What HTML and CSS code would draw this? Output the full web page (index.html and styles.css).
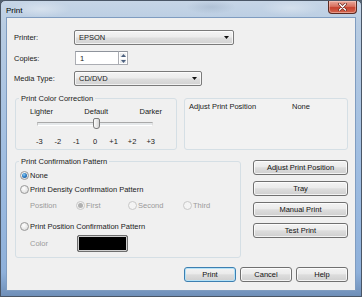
FILE: index.html
```html
<!DOCTYPE html>
<html lang="en">
<head>
  <meta charset="UTF-8">
  <meta name="viewport" content="width=device-width, initial-scale=1.0">
  <title>Print</title>
  <link rel="stylesheet" href="styles.css">
</head>
<body>
  <div class="window">
    <div class="titlebar">
      <span class="title">Print</span>
      <div class="close-btn">
        <svg width="9" height="8" viewBox="0 0 9 8">
          <path d="M1.5 1 L7.5 7 M7.5 1 L1.5 7" stroke="#6a2c24" stroke-width="2.8" stroke-linecap="round"/>
          <path d="M1.5 1 L7.5 7 M7.5 1 L1.5 7" stroke="#fff" stroke-width="1.4" stroke-linecap="round"/>
        </svg>
      </div>
    </div>

    <div class="client">
      <div class="form-row">
        <span class="form-label">Printer:</span>
        <div class="combo combo-printer">
          <span>EPSON</span>
          <svg class="combo-arrow" width="5" height="3" viewBox="0 0 5 3"><polygon points="0,0 5,0 2.5,3" fill="#111"/></svg>
        </div>
      </div>

      <div class="form-row row-copies">
        <span class="form-label">Copies:</span>
        <div class="spin">
          <div class="spin-input">1</div>
          <div class="spin-buttons">
            <div class="spin-btn"><svg width="5" height="3" viewBox="0 0 5 3"><polygon points="0,3 5,3 2.5,0" fill="#4c607f"/></svg></div>
            <div class="spin-btn"><svg width="5" height="3" viewBox="0 0 5 3"><polygon points="0,0 5,0 2.5,3" fill="#4c607f"/></svg></div>
          </div>
        </div>
      </div>

      <div class="form-row row-media">
        <span class="form-label">Media Type:</span>
        <div class="combo combo-media">
          <span>CD/DVD</span>
          <svg class="combo-arrow" width="5" height="3" viewBox="0 0 5 3"><polygon points="0,0 5,0 2.5,3" fill="#111"/></svg>
        </div>
      </div>

      <div class="groups-row">
        <fieldset class="group group-color">
          <legend>Print Color Correction</legend>
          <div class="scale-labels">
            <span>Lighter</span>
            <span>Default</span>
            <span>Darker</span>
          </div>
          <div class="slider">
            <div class="slider-track">
              <div class="slider-thumb"></div>
            </div>
          </div>
          <div class="scale-numbers">
            <span>-3</span><span>-2</span><span>-1</span><span>0</span><span>+1</span><span>+2</span><span>+3</span>
          </div>
        </fieldset>

        <div class="position-box">
          <span class="position-name">Adjust Print Position</span>
          <span>None</span>
        </div>
      </div>

      <div class="middle-row">
        <fieldset class="group group-confirm">
          <legend>Print Confirmation Pattern</legend>
          <div class="radio-row row-none">
            <span class="radio checked"></span><span>None</span>
          </div>
          <div class="radio-row row-density">
            <span class="radio"></span><span>Print Density Confirmation Pattern</span>
          </div>
          <div class="sub-row row-position">
            <span class="sub-label">Position</span>
            <div class="sub-item item-first"><span class="radio disabled checked"></span><span>First</span></div>
            <div class="sub-item item-second"><span class="radio disabled"></span><span>Second</span></div>
            <div class="sub-item"><span class="radio disabled"></span><span>Third</span></div>
          </div>
          <div class="radio-row row-pattern">
            <span class="radio"></span><span>Print Position Confirmation Pattern</span>
          </div>
          <div class="sub-row row-color">
            <span class="sub-label color-label">Color</span>
            <div class="color-swatch"></div>
          </div>
        </fieldset>

        <div class="side-buttons">
          <div class="btn">Adjust Print Position</div>
          <div class="btn">Tray</div>
          <div class="btn">Manual Print</div>
          <div class="btn">Test Print</div>
        </div>
      </div>

      <div class="footer">
        <div class="btn btn-default">Print</div>
        <div class="btn">Cancel</div>
        <div class="btn">Help</div>
      </div>
    </div>
  </div>
</body>
</html>
```

FILE: styles.css
```css
* {
  box-sizing: border-box;
}
body {
  margin: 0;
  width: 362px;
  height: 297px;
  overflow: hidden;
  background: #53606e;
  font-family: "Liberation Sans", Arial, sans-serif;
  font-size: 7.5px;
  line-height: 9px;
  color: #1a1a1a;
}
.window {
  width: 362px;
  height: 297px;
  display: flex;
  flex-direction: column;
  border: 1px solid #4a5666;
  border-radius: 5px 5px 0 0;
  background:
    radial-gradient(ellipse 30px 8px at 40px 8px, rgba(255, 255, 255, 0.35), transparent),
    radial-gradient(ellipse 25px 7px at 210px 6px, rgba(120, 140, 165, 0.25), transparent),
    radial-gradient(ellipse 30px 8px at 290px 7px, rgba(255, 255, 255, 0.3), transparent),
    linear-gradient(#c6d5e6, #b8cce2 8%, #9fbde1 55%, #8eb0da 92%, #6f8fb8);
}
.titlebar {
  height: 17px;
  display: flex;
  align-items: flex-start;
  padding-left: 5px;
}
.title {
  font-size: 8px;
  color: #000;
  margin-top: 5px;
}
.close-btn {
  margin-left: auto;
  margin-right: 4px;
  width: 29px;
  height: 13px;
  display: flex;
  align-items: center;
  justify-content: center;
  border: 1px solid #5b2a22;
  border-top: none;
  border-radius: 0 0 4px 4px;
  background: linear-gradient(#e9a99c, #d7705f 45%, #c6422f 55%, #d4664f);
  box-shadow: inset 0 0 0 1px rgba(255, 220, 210, 0.45);
}
.client {
  flex: 1;
  margin: 0 6px 6px 6px;
  padding: 12px 7px 0 7px;
  background: #f0f0f0;
  box-shadow: 0 0 0 1px #7f9cc0;
  display: flex;
  flex-direction: column;
}
.form-row {
  display: flex;
  align-items: center;
  height: 15px;
}
.row-copies {
  margin-top: 6px;
  height: 14px;
}
.row-media {
  margin-top: 6px;
}
.form-label {
  width: 60px;
}
.combo {
  height: 15px;
  display: flex;
  align-items: center;
  padding-left: 4px;
  padding-right: 4px;
  border: 1px solid #7a7a7a;
  border-radius: 2px;
  background: linear-gradient(#f4f4f4, #ececec 48%, #dedede 52%, #d2d2d2);
  box-shadow: inset 0 0 0 1px rgba(255, 255, 255, 0.7);
}
.combo-arrow {
  margin-left: auto;
}
.combo-printer {
  width: 160px;
}
.combo-media {
  width: 128px;
}
.spin {
  display: flex;
  height: 14px;
  margin-left: 1px;
}
.spin-input {
  width: 43px;
  padding-left: 4px;
  padding-top: 2px;
  background: #fff;
  border: 1px solid #abadb3;
  border-right: none;
  border-top-color: #8f949c;
}
.spin-buttons {
  width: 10px;
  display: flex;
  flex-direction: column;
  border: 1px solid #abadb3;
  border-top-color: #8f949c;
  background: #fff;
}
.spin-btn {
  flex: 1;
  display: flex;
  align-items: center;
  justify-content: center;
  background: linear-gradient(#f3f3f3, #e3e6ea);
  border: 1px solid #fff;
}
.groups-row {
  display: flex;
  margin-top: 8px;
  height: 56px;
}
.group {
  margin: 0;
  padding: 0;
  border: 1px solid #d5dfe5;
  border-radius: 3px;
  min-width: 0;
}
.group legend {
  padding: 0 2px;
  margin-left: 3px;
  line-height: 9px;
}
.group-color {
  width: 162px;
  margin-left: 1px;
  height: 56px;
}
.scale-labels {
  display: flex;
  justify-content: space-between;
  margin-top: 4px;
  padding: 0 14px 0 14px;
}
.slider {
  margin-top: 2px;
  height: 11px;
  display: flex;
  align-items: center;
  padding-left: 21px;
}
.slider-track {
  position: relative;
  width: 116px;
  height: 4px;
  border-top: 1px solid #a9a9a9;
  border-left: 1px solid #c4c4c4;
  border-right: 1px solid #dcdcdc;
  border-bottom: 1px solid #ffffff;
  background: #e5e8ea;
}
.slider-thumb {
  position: absolute;
  left: 55px;
  top: -5px;
  width: 7px;
  height: 11px;
  border: 1px solid #7b7b7b;
  border-radius: 2px 2px 3px 3px;
  background: linear-gradient(90deg, #fbfbfb, #e6e6e6 60%, #d3d3d3);
}
.scale-numbers {
  display: grid;
  grid-template-columns: repeat(7, 1fr);
  margin-top: 8px;
  padding: 0 16px 0 14px;
  text-align: center;
}
.position-box {
  width: 164px;
  margin-left: auto;
  margin-top: 4px;
  display: flex;
  padding: 3px 0 0 4px;
  border: 1px solid #d5dfe5;
  border-radius: 3px;
  background: #f2f2f2;
}
.position-name {
  width: 103px;
}
.middle-row {
  display: flex;
  margin-top: 7px;
}
.group-confirm {
  width: 226px;
  margin-left: 1px;
  height: 101px;
  padding-bottom: 5px;
}
.radio-row {
  display: flex;
  align-items: center;
  height: 13px;
  padding-left: 4px;
}
.row-none {
  margin-top: 3px;
}
.row-density {
  margin-top: 1px;
}
.row-pattern {
  margin-top: 8px;
}
.radio {
  width: 9px;
  height: 9px;
  margin-right: 1px;
  border-radius: 50%;
  border: 1px solid #999;
  background: radial-gradient(circle at 40% 35%, #ffffff, #e8e8e8 55%, #d2d2d2);
  display: flex;
  align-items: center;
  justify-content: center;
}
.radio.checked::after {
  content: "";
  width: 5px;
  height: 5px;
  border-radius: 50%;
  background: radial-gradient(circle at 40% 35%, #8fd0f5, #2a78c0 50%, #144e8c);
}
.radio.disabled {
  border-color: #c8c8c8;
  background: #f4f4f4;
}
.radio.disabled.checked::after {
  background: #b0b0b0;
}
.sub-row {
  display: flex;
  align-items: center;
  padding-left: 14px;
  color: #9a9a9a;
}
.row-position {
  margin-top: 3px;
  height: 13px;
}
.row-color {
  margin-top: 2px;
  height: 17px;
}
.sub-label {
  width: 46px;
}
.color-label {
  width: 47px;
}
.sub-item {
  display: flex;
  align-items: center;
}
.item-first {
  width: 52px;
}
.item-second {
  width: 55px;
}
.color-swatch {
  width: 51px;
  height: 17px;
  border: 1px solid #6f6f6f;
  border-radius: 2px;
  background: #000;
  box-shadow: inset 0 0 0 1px #cfcfcf;
}
.side-buttons {
  width: 95px;
  margin-left: auto;
  margin-top: 3px;
  display: flex;
  flex-direction: column;
  gap: 6px;
}
.btn {
  height: 15px;
  display: flex;
  align-items: center;
  justify-content: center;
  border: 1px solid #707070;
  border-radius: 3px;
  background: linear-gradient(#f3f3f3, #ebebeb 45%, #dddddd 52%, #cfcfcf);
  box-shadow: inset 0 0 0 1px rgba(255, 255, 255, 0.75);
  color: #111;
}
.footer {
  display: flex;
  justify-content: flex-end;
  gap: 4px;
  margin-top: 9px;
}
.footer .btn {
  width: 52px;
}
.btn-default {
  border-color: #3c7fb1;
  box-shadow: inset 0 0 0 1px #b5e2f7;
}
```
